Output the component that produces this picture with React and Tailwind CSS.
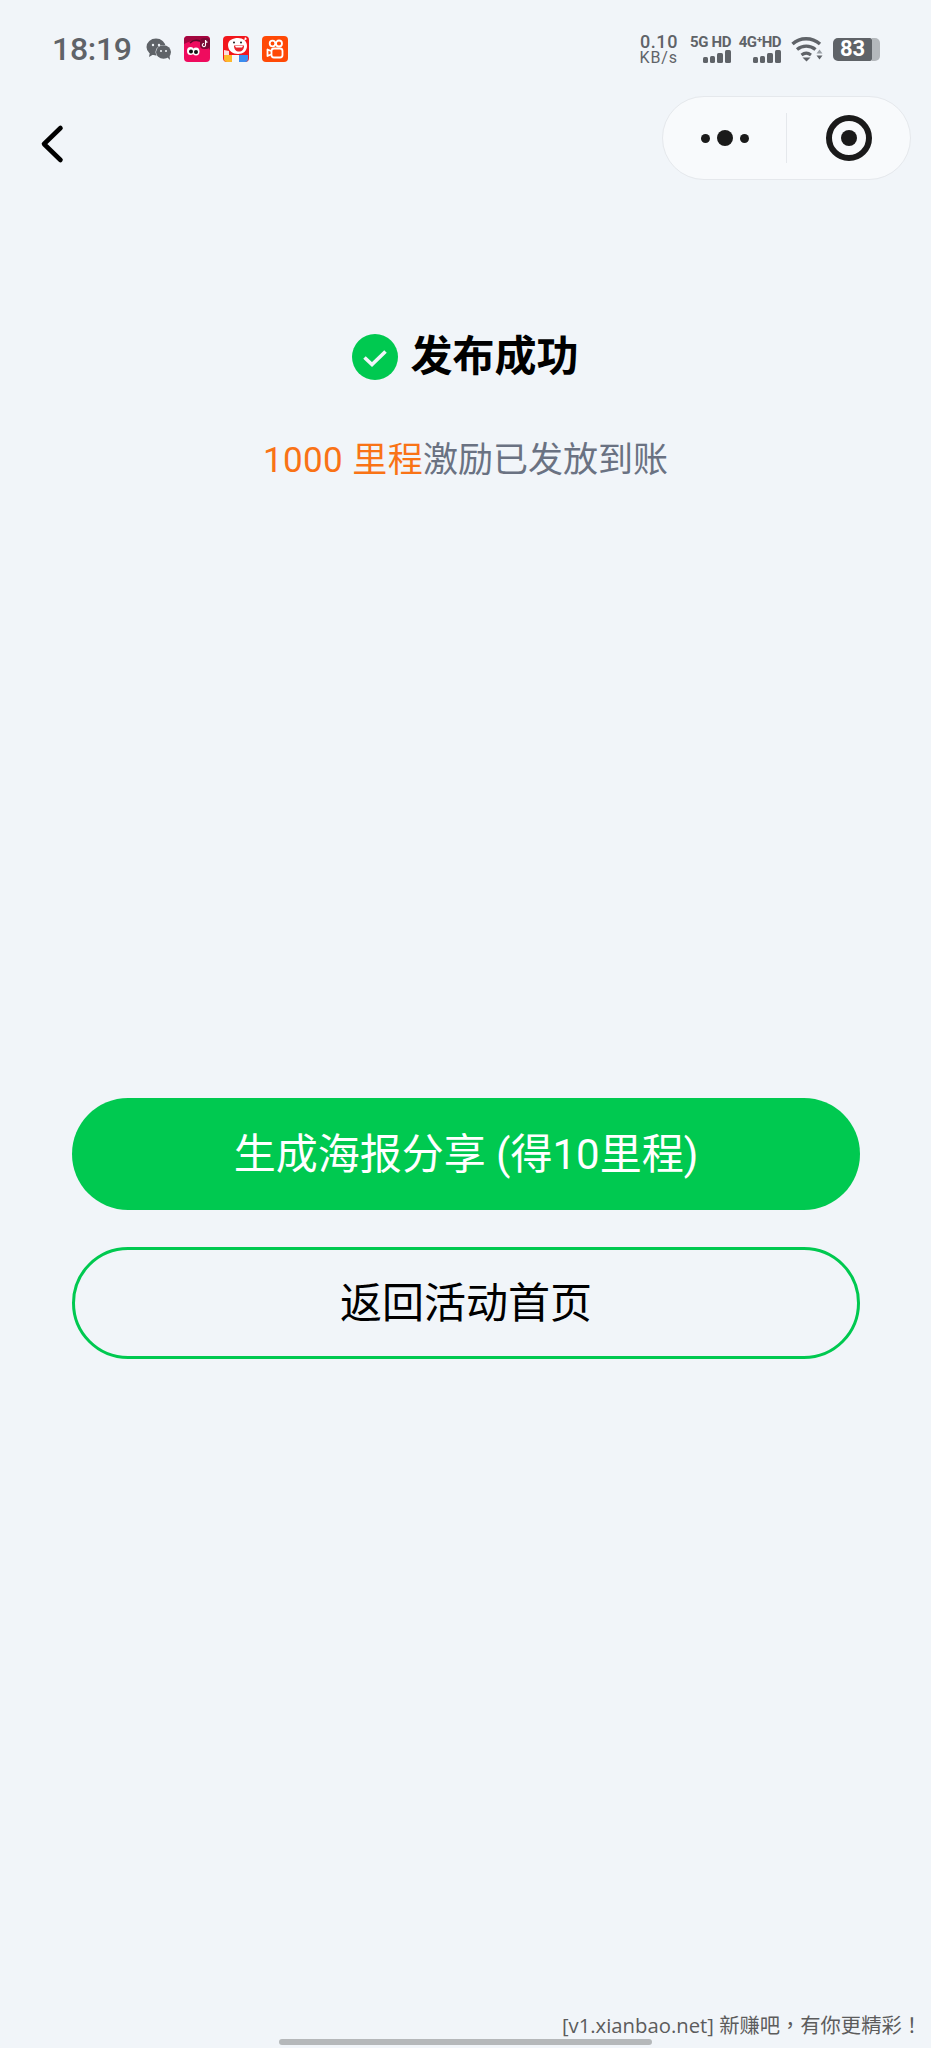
import React from "react";

const CJK = "font-['Roboto','Noto_Sans_CJK_SC',sans-serif]";

function WechatIcon() {
  return (
    <svg width="26" height="23" viewBox="0 0 26 23" fill="#5f6368">
      <ellipse cx="10" cy="9" rx="9.5" ry="8.5" />
      <path d="M4 14l-1 5 5-3z" />
      <ellipse cx="17.5" cy="14" rx="8" ry="7" fill="#f1f5f9" />
      <ellipse cx="17.5" cy="14" rx="7.5" ry="6.7" />
      <path d="M21 19l3 3-.5-5z" />
      <circle cx="7" cy="7" r="1.2" fill="#f1f5f9" />
      <circle cx="13" cy="7" r="1.2" fill="#f1f5f9" />
      <circle cx="15" cy="13" r="1" fill="#f1f5f9" />
      <circle cx="20" cy="13" r="1" fill="#f1f5f9" />
    </svg>
  );
}

function DouyinIcon() {
  return (
    <svg width="26" height="26" viewBox="0 0 26 26">
      <rect width="26" height="26" rx="4" fill="#ef0b5e" />
      <path d="M0 4a4 4 0 014-4h18a4 4 0 014 4v10C20 5 10 2 0 8z" fill="#a3063f" />
      <path d="M6 7c3-3 7-3 10-2" stroke="#5c0a2a" strokeWidth="1.5" fill="none" />
      <rect x="16" y="2" width="10" height="11" rx="4" fill="#7a0a35" />
      <path d="M21.5 4v5a1.6 1.6 0 11-1.5-1.5M21.5 4.500c.3 1 1 1.600 2 1.700" stroke="#fff" strokeWidth="1.100" fill="none" />
      <ellipse cx="6.500" cy="15" rx="3.500" ry="4" fill="#fff" />
      <ellipse cx="12" cy="15.500" rx="3.500" ry="4" fill="#fff" />
      <circle cx="7" cy="15.500" r="2" fill="#111" />
      <circle cx="12" cy="16" r="2" fill="#111" />
    </svg>
  );
}

function JdIcon() {
  return (
    <svg width="26" height="26" viewBox="0 0 26 26">
      <rect width="26" height="26" rx="4" fill="#f2161c" />
      <path d="M5 9c0-5 5-7 10-7s9 3 9 8-4 8-9 8-10-3-10-9z" fill="#fff" />
      <path d="M11 9.500h10c0 4-2 6-5 6s-5-2-5-6z" fill="#e8262c" />
      <path d="M12 10h8l-1 1.500h-6z" fill="#fff" />
      <circle cx="11" cy="6.500" r="1" fill="#222" />
      <circle cx="18" cy="6.500" r="1" fill="#222" />
      <path d="M1 14l5 1v4H1z" fill="#fff" opacity=".85" />
      <path d="M1 19h8v7H4a3 3 0 01-3-3z" fill="#fdb92c" />
      <rect x="9" y="19" width="7" height="7" fill="#f4f6fb" />
      <path d="M16 19h9v4a3 3 0 01-3 3h-6z" fill="#3a8df0" />
      <path d="M22 1l2 2-3 2z" fill="#fff" />
    </svg>
  );
}

function KuaishouIcon() {
  return (
    <svg width="26" height="26" viewBox="0 0 26 26" fill="none">
      <rect width="26" height="26" rx="4" fill="#ff4906" />
      <circle cx="10.500" cy="7.500" r="2.800" stroke="#fff" strokeWidth="1.800" />
      <circle cx="17" cy="7.500" r="3" stroke="#fff" strokeWidth="1.800" />
      <rect x="9.500" y="12.500" width="11" height="9" rx="2.500" stroke="#fff" strokeWidth="1.800" />
      <path d="M9 15l-3.500-1.500v6.500L9 18.500" stroke="#fff" strokeWidth="1.800" strokeLinejoin="round" />
    </svg>
  );
}

function SignalBars() {
  return (
    <div className="flex items-end gap-[2px] h-[13px]">
      <div className="w-[5px] h-[6px] rounded-[1.5px] bg-[#5f6368]" />
      <div className="w-[5px] h-[7px] rounded-[1.5px] bg-[#5f6368]" />
      <div className="w-[6px] h-[10px] rounded-[1.5px] bg-[#5f6368]" />
      <div className="w-[6px] h-[13px] rounded-[1.5px] bg-[#5f6368]" />
    </div>
  );
}

function WifiIcon() {
  return (
    <svg width="33" height="26" viewBox="0 0 33 26" fill="none">
      <path d="M1.500 8C9 1 21 1 29 8" stroke="#5f6368" strokeWidth="3.400" />
      <path d="M6 13.500c5.500-4.500 13-4.500 18.500 0" stroke="#5f6368" strokeWidth="3.400" />
      <path d="M10.500 19c3-2.400 6.500-2.400 9.500 0" stroke="#5f6368" strokeWidth="3" />
      <path d="M11.500 21.500h8l-4 4z" fill="#5f6368" />
      <path d="M28.500 13.500l3 4h-6z" fill="#9aa0a6" />
      <path d="M25.500 19.500h6l-3 4z" fill="#5f6368" />
    </svg>
  );
}

function StatusBar() {
  return (
    <div className="flex items-center justify-between h-[96px] pt-[2px] pl-[52px] pr-[51px]">
      <div className="flex items-center">
        <span className="font-['Roboto',sans-serif] font-medium text-[32px] leading-none text-[#5f6368] tracking-[-0.3px] w-[94px]">18:19</span>
        <WechatIcon />
        <div className="ml-[12px] flex gap-[13px]">
          <DouyinIcon />
          <JdIcon />
          <KuaishouIcon />
        </div>
      </div>
      <div className="flex items-center">
        <div className="flex flex-col items-end font-['Roboto',sans-serif] text-[#5f6368] w-[40px]">
          <span className="text-[18px] leading-[17px] font-medium tracking-[0.6px]">0.10</span>
          <span className="text-[16px] leading-[16px] tracking-[0.9px]">KB/s</span>
        </div>
        <div className="ml-[11px] flex flex-col items-end w-[42px]">
          <span className="font-['Roboto',sans-serif] font-bold text-[15px] leading-[15px] tracking-[-0.4px] text-[#5f6368] whitespace-nowrap">5G HD</span>
          <SignalBars />
        </div>
        <div className="ml-[8px] flex flex-col items-end w-[42px]">
          <span className="font-['Roboto',sans-serif] font-bold text-[15px] leading-[15px] tracking-[-0.6px] text-[#5f6368] whitespace-nowrap">4G⁺HD</span>
          <SignalBars />
        </div>
        <div className="ml-[10px]">
          <WifiIcon />
        </div>
        <div className="ml-[9px] flex items-center">
          <div className="w-[39px] h-[23px] rounded-l-[5px] rounded-r-[2px] bg-[#5f6368] flex items-center justify-center font-['Roboto',sans-serif] font-bold text-[22px] text-white leading-none">83</div>
          <div className="w-[8px] h-[23px] rounded-r-[5px] bg-[#b4b8bc]" />
        </div>
      </div>
    </div>
  );
}

export default function App() {
  return (
    <div className={`relative flex flex-col w-full h-[2048px] overflow-hidden bg-[#f1f5f9] ${CJK}`}>
      <StatusBar />

      <div className="flex items-center justify-between pl-[39px] pr-[20px]">
        <svg width="26" height="40" viewBox="0 0 26 40" fill="none" className="mt-[12px]">
          <path d="M21.500 4L5 20 21.500 36" stroke="#000" strokeWidth="4.600" strokeLinecap="round" strokeLinejoin="round" />
        </svg>
        <div className="flex items-center w-[249px] h-[84px] rounded-full bg-[#f8fafc] border border-[#e5e8ec]">
          <div className="flex flex-1 items-center justify-center gap-[7px] pl-[1px]">
            <div className="w-[9px] h-[9px] rounded-full bg-[#1a1a1a]" />
            <div className="w-[16px] h-[16px] rounded-full bg-[#1a1a1a]" />
            <div className="w-[9px] h-[9px] rounded-full bg-[#1a1a1a]" />
          </div>
          <div className="w-px h-[50px] bg-[#e5e8ec]" />
          <div className="flex flex-1 items-center justify-center pl-[2px]">
            <div className="flex items-center justify-center w-[46px] h-[46px] rounded-full border-[6px] border-[#1a1a1a]">
              <div className="w-[16px] h-[16px] rounded-full bg-[#1a1a1a]" />
            </div>
          </div>
        </div>
      </div>

      <div className="mt-[154px] flex items-center justify-center gap-[12px]">
        <svg width="46" height="46" viewBox="0 0 46 46" fill="none">
          <circle cx="23" cy="23" r="23" fill="#00c950" />
          <path d="M12.500 23.500l7.500 7 13.500-13" stroke="#f1f5f9" strokeWidth="3.600" />
        </svg>
        <h1 className="text-[42px] leading-[46px] font-bold text-black">发布成功</h1>
      </div>

      <p className="mt-[59px] text-center text-[35px] leading-[44px] text-[#6a7282]">
        <span className="text-[#f97316] tracking-[0.4px]">1000 里程</span>激励已发放到账
      </p>

      <div className="mt-[615px] flex flex-col gap-[37px] pl-[72px] pr-[71px]">
        <button className="h-[112px] rounded-full bg-[#00c950] text-white text-[42px]">生成海报分享 (得10里程)</button>
        <button className="h-[112px] rounded-full border-[3px] border-[#00c950] text-black text-[42px]">返回活动首页</button>
      </div>

      <div className="mt-auto mb-[3px] ml-[279px] w-[373px] h-[6px] rounded-full bg-[#b5b8ba]" />

      <span className="absolute right-[9px] bottom-[10px] text-[20.300px] leading-[26px] text-[#5c5c5c] font-['Open_Sans','Noto_Sans_CJK_TC',sans-serif] whitespace-nowrap">
        [v1.xianbao.net] 新赚吧，有你更精彩！
      </span>
    </div>
  );
}
